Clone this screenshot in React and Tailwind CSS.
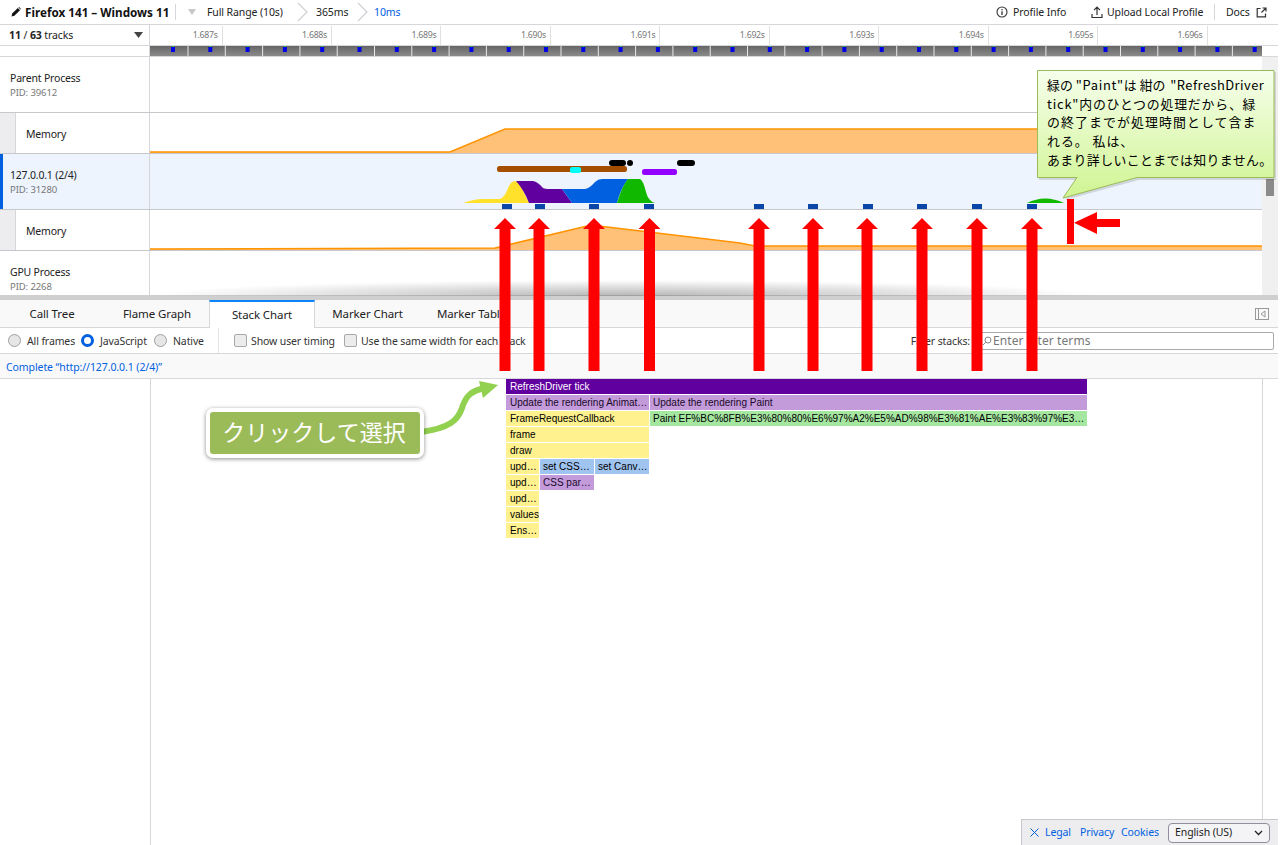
const UI = "font-['Noto_Sans','Open_Sans',sans-serif]";
const ticks = [1.687,1.688,1.689,1.690,1.691,1.692,1.693,1.694,1.695,1.696];
const segs = Array.from({length:30},(_,i)=>i);
const arrows = [505,539,594,649.5,759,813,867,922,977,1032];
const squares = [502,535,589,644,754,808,863,917,972,1027];

function Pencil(){return <svg width="10" height="10" viewBox="0 0 10 10" className="mr-[4px] shrink-0"><path d="M0.5 9.5 L1.2 6.6 L6.8 1 L9 3.2 L3.4 8.8 Z" fill="#111"/><path d="M7.4 .5 L8.1 0 L10 1.9 L9.5 2.6 Z" fill="#111"/></svg>}
function Chev(){return <svg width="12" height="22" viewBox="0 0 12 22" className="shrink-0"><path d="M1 2 L10 11 L1 20" fill="none" stroke="#d0d0d4" strokeWidth="1.2"/></svg>}

function TopBar(){
  return <div className="flex h-[25px] items-center whitespace-nowrap border-b border-[#d7d7db] bg-white pl-[11px] text-[10.5px] text-[#222] tracking-[-0.1px]">
    <Pencil/>
    <span className="w-[147px] shrink-0 pt-[1px] text-[11.7px] font-bold text-[#111] tracking-[0px]">Firefox 141 – Windows 11</span>
    <div className="ml-[3px] h-[16px] w-px bg-[#d7d7db]"/>
    <svg width="8" height="6" viewBox="0 0 8 6" className="ml-[12px]"><path d="M0 0H8L4 6Z" fill="#c8c8cc"/></svg>
    <span className="ml-[11px] w-[78px] pt-[1px]">Full Range (10s)</span>
    <div className="ml-[12px] flex w-[19px]"><Chev/></div>
    <span className="w-[32px] pt-[1px]">365ms</span>
    <div className="ml-[9px] flex w-[17px]"><Chev/></div>
    <span className="pt-[1px] text-[#0060df]">10ms</span>
    <div className="ml-auto flex items-center">
      <svg width="12" height="12" viewBox="0 0 12 12"><circle cx="6" cy="6" r="5" fill="none" stroke="#333" strokeWidth="1.1"/><path d="M6 5.2V9M6 3V4.2" stroke="#333" strokeWidth="1.3"/></svg>
      <span className="ml-[5px] w-[54px] pt-[1px]">Profile Info</span>
      <svg width="12" height="13" viewBox="0 0 12 13" className="ml-[24px]"><path d="M6 9V1.5M3 4.2L6 1.2L9 4.2M1 8V11.5H11V8" fill="none" stroke="#333" strokeWidth="1.2"/></svg>
      <span className="ml-[4px] w-[97px] pt-[1px]">Upload Local Profile</span>
      <div className="ml-[10px] h-[16px] w-px bg-[#d7d7db]"/>
      <span className="ml-[11px] w-[25px] pt-[1px]">Docs</span>
      <svg width="11" height="11" viewBox="0 0 11 11" className="ml-[5px] mr-[11px]"><path d="M4.5 1.5H1.2V9.8H9.5V6.5M6.5 1H10V4.5M10 1L5.5 5.5" fill="none" stroke="#333" strokeWidth="1.2"/></svg>
    </div>
  </div>;
}

function Ruler(){
  return <div className="flex h-[21px] border-b border-[#d7d7db] bg-white">
    <div className="flex w-[150px] shrink-0 items-center justify-between border-r border-[#d7d7db] pl-[9px] pr-[6px] text-[10.5px] text-[#222] tracking-[-0.1px]">
      <span className="pt-[2px]"><b>11</b> / <b>63</b> tracks</span>
      <svg width="9" height="6" viewBox="0 0 9 6"><path d="M0 0H9L4.5 6Z" fill="#444"/></svg>
    </div>
    <div className="flex flex-1 overflow-hidden pt-[1px] text-[8.8px] text-[#777] tracking-[-0.3px]">
      {ticks.map((t,i)=><div key={t} className={`flex shrink-0 items-center justify-end border-r border-[#e0e0e0] pr-[4px] ${i===0?'w-[72.6px]':'w-[109.45px]'}`}>{t.toFixed(3)}s</div>)}
    </div>
  </div>;
}

function TickRow(){
  return <div className="flex h-[11px] border-b border-[#d7d7db] bg-white">
    <div className="w-[150px] shrink-0 border-r border-[#d7d7db]"/>
    <svg width="1112" height="10" viewBox="150 46 1112 10" className="block">
      <defs><linearGradient id="tg" x1="0" y1="0" x2="0" y2="1"><stop offset="0" stopColor="#666"/><stop offset="1" stopColor="#8a8a8a"/></linearGradient></defs>
      <rect x="150" y="46" width="1112" height="10" fill="url(#tg)"/>
      {segs.map(i=><g key={i}>
        <rect x={187.5+i*37.3} y="46" width="1" height="10" fill="#e8e8e8"/>
        <rect x={171+i*37.3} y="47" width="4" height="5" fill="#0000e6"/>
        <rect x={172+i*37.3} y="46" width="2" height="1" fill="#22c050"/>
      </g>)}
    </svg>
  </div>;
}

function Label({title,pid,selected}){
  return <div className={`relative flex w-[150px] shrink-0 flex-col justify-start border-r border-[#d7d7db] pl-[10px] pt-[14px] ${selected?'bg-[#edf4fd]':'bg-white'}`}>
    {selected && <div className="absolute left-0 top-0 bottom-0 w-[3px] bg-[#0060df]"/>}
    <div className="text-[10.5px] leading-[15px] text-[#222] tracking-[-0.2px]">{title}</div>
    <div className="text-[9.5px] leading-[13px] text-[#777] tracking-[-0.1px]">PID: {pid}</div>
  </div>;
}
function MemLabel(){
  return <div className="flex w-[150px] shrink-0 border-r border-[#d7d7db] bg-white">
    <div className="w-[16px] border-r border-[#d7d7db] bg-[#ededf0]"/>
    <div className="flex items-center pl-[10px] pt-[4px] text-[10.5px] text-[#222] tracking-[-0.2px]">Memory</div>
  </div>;
}

function Tracks(){
  return <div className="flex h-[238px]">
    <div className="flex w-[1262px] shrink-0 flex-col overflow-hidden">
      <div className="flex h-[56px] shrink-0 border-b border-[#c8c8cc]"><Label title="Parent Process" pid="39612"/><div className="flex-1 bg-white"/></div>
      <div className="flex h-[41px] shrink-0 border-b border-[#c8c8cc]"><MemLabel/>
        <svg className="block" width="1112" height="40" viewBox="150 113 1112 40">
          <path d="M150 152L450 152L505 129L1262 129L1262 153L150 153Z" fill="#ffc078"/>
          <path d="M150 152L450 152L505 129L1262 129" fill="none" stroke="#ff9400" strokeWidth="1.5"/>
        </svg>
      </div>
      <div className="flex h-[56px] shrink-0 border-b border-[#c8c8cc] bg-[#edf4fd]"><Label title="127.0.0.1 (2/4)" pid="31280" selected/>
        <svg className="block" width="1112" height="55" viewBox="150 154 1112 55">
          <path d="M463 203Q475 199 482 199L500 199Q505 197 508 188Q511 181 515 181Q520 182 524 193L529 203Z" fill="#ffe02a"/>
          <path d="M516 181L533 181Q538 182 543 188Q545 189 548 189L562 189L572 203L529 203Q524 190 516 181Z" fill="#5f009f"/>
          <path d="M562 189L585 189Q590 188 595 182Q598 179 602 179L628 179Q620 190 617 203L572 203Z" fill="#0060df"/>
          <path d="M617 203Q622 186 628 179L640 179Q643 180 646 192Q648 201 655 203Z" fill="#10b900"/>
          <rect x="497" y="166" width="130" height="6" rx="2.5" fill="#a44e00"/>
          <rect x="570" y="167" width="11" height="6" rx="2" fill="#00ffff"/>
          <rect x="609" y="160" width="17" height="6" rx="3" fill="#000"/>
          <circle cx="630" cy="163" r="3" fill="#000"/>
          <rect x="677" y="160" width="18" height="6" rx="3" fill="#000"/>
          <rect x="642" y="169" width="35" height="6" rx="2.5" fill="#9400ff"/>
          <path d="M1027 203Q1045 194 1064 203Z" fill="#10b900"/>
          {squares.map(x=><rect key={x} x={x} y="204" width="10" height="5" fill="#0a46a8"/>)}
        </svg>
      </div>
      <div className="flex h-[41px] shrink-0 border-b border-[#c8c8cc]"><MemLabel/>
        <svg className="block" width="1112" height="40" viewBox="150 210 1112 40">
          <path d="M150 249L495 248L585 226.5L603 226.5L740 243L755 246L1262 246L1262 250L150 250Z" fill="#ffc078"/>
          <path d="M150 249L495 248L585 226.5L603 226.5L740 243L755 246L1262 246" fill="none" stroke="#ff9400" strokeWidth="1.5"/>
        </svg>
      </div>
      <div className="flex h-[56px] shrink-0"><Label title="GPU Process" pid="2268"/><div className="flex-1 bg-white"/></div>
    </div>
    <div className="flex-1 bg-[#f0f0f0] pl-[4px] pt-[122px]"><div className="h-[17px] w-[8px] bg-[#8a8a8a]"/></div>
  </div>;
}

function Tabs(){
  const t=[["Call Tree","w-[102px] pl-[2px]"],["Flame Graph","w-[107px] pl-[3px]"],["Stack Chart","w-[106px]"],["Marker Chart","w-[105px]"],["Marker Table","w-[103px]"]];
  return <div className="flex h-[28px] border-b border-[#d7d7db] bg-[#f9f9fa] text-[11.5px] text-[#222] tracking-[-0.1px]">
    {t.map(([n,w])=> n==="Stack Chart"
      ? <div key={n} className={`${w} -mb-px flex items-center justify-center border-t-2 border-r border-l border-t-[#0a84ff] border-x-[#d7d7db] bg-white`}>{n}</div>
      : <div key={n} className={`${w} flex items-center justify-center`}>{n}</div>)}
    <svg width="14" height="12" viewBox="0 0 14 12" className="ml-auto mr-[9px] mt-[8px]"><rect x=".5" y=".5" width="13" height="11" fill="none" stroke="#999"/><path d="M3.5 0V12" stroke="#999"/><path d="M10 3V9L6 6Z" fill="none" stroke="#999"/></svg>
  </div>;
}
function Radio({on,children,cls}){
  return <label className={`flex items-center ${cls}`}>
    {on ? <span className="h-[13px] w-[13px] rounded-full border-[3.5px] border-[#0060df] bg-white"/>
        : <span className="h-[13px] w-[13px] rounded-full border border-[#a0a0a0] bg-[#e6e6e6]"/>}
    <span className="ml-[6px] pt-[2px]">{children}</span>
  </label>;
}
function Check({children,cls}){
  return <label className={`flex items-center ${cls}`}>
    <span className="h-[13px] w-[13px] rounded-[2px] border border-[#a8a8a8] bg-[#ececec]"/>
    <span className="ml-[4px] pt-[2px]">{children}</span>
  </label>;
}
function Settings(){
  return <div className="flex h-[26px] items-center border-b border-[#d7d7db] bg-white text-[10.5px] text-[#333] tracking-[-0.12px]">
    <Radio cls="ml-[8px] w-[73px]">All frames</Radio>
    <Radio on cls="w-[73px]">JavaScript</Radio>
    <Radio cls="w-[64px]">Native</Radio>
    <div className="h-full w-px bg-[#e4e4e4]"/>
    <Check cls="ml-[15px] w-[110px]">Show user timing</Check>
    <Check>Use the same width for each stack</Check>
    <span className="ml-auto mr-[3px] pt-[2px]">Filter stacks:</span>
    <div className="mr-[4px] flex h-[18px] w-[301px] items-center rounded-[2px] border border-[#aaa] bg-white pl-[8px]">
      <svg width="10" height="10" viewBox="0 0 10 10" className="shrink-0"><circle cx="6" cy="4" r="3" fill="none" stroke="#888"/><path d="M3.8 6.2L1 9" stroke="#888"/></svg>
      <span className="ml-[1px] pt-[1px] text-[12px] text-[#777] tracking-[0.1px]">Enter filter terms</span>
    </div>
  </div>;
}
function Crumb(){
  return <div className="flex h-[25px] items-center border-b border-[#d7d7db] bg-[#f9f9fa] pl-[6px] pt-[3px] text-[10.5px] text-[#0060df] tracking-[-0.08px]">Complete “http://127.0.0.1 (2/4)”</div>;
}
function Cell({w,c,children}){
  return <div className={`flex h-[15px] shrink-0 items-center overflow-hidden whitespace-nowrap pb-[1px] pl-[4px] ${w} ${c}`}>{children}</div>;
}
const Y="bg-[#fff28e] text-black", L="bg-[#c39bdb] text-[#1a0a2a]", B="bg-[#a0c4f0] text-black";
function Chart(){
  return <div className="flex h-[466px] bg-white">
    <div className="w-[151px] shrink-0 border-r border-[#d7d7db]"/>
    <div className="flex w-[1112px] shrink-0 flex-col gap-px border-r border-[#d7d7db] pl-[355px] font-['Liberation_Sans',Arial,sans-serif] text-[10px]">
      <div className="flex"><Cell w="w-[581px]" c="bg-[#5f009f] text-white">RefreshDriver tick</Cell></div>
      <div className="flex gap-px"><Cell w="w-[143px]" c={L}>Update the rendering Animat…</Cell><Cell w="w-[437px] !pl-[3px]" c={L}>Update the rendering Paint</Cell></div>
      <div className="flex gap-px"><Cell w="w-[143px]" c={Y}>FrameRequestCallback</Cell><Cell w="w-[437px] !pl-[3px]" c="bg-[#a5e6a0] text-black">Paint EF%BC%8FB%E3%80%80%E6%97%A2%E5%AD%98%E3%81%AE%E3%83%97%E3…</Cell></div>
      <div className="flex"><Cell w="w-[143px]" c={Y}>frame</Cell></div>
      <div className="flex"><Cell w="w-[143px]" c={Y}>draw</Cell></div>
      <div className="flex gap-px"><Cell w="w-[33px]" c={Y}>upd…</Cell><Cell w="w-[54px] !pl-[3px]" c={B}>set CSS…</Cell><Cell w="w-[54px] !pl-[3px]" c={B}>set Canv…</Cell></div>
      <div className="flex gap-px"><Cell w="w-[33px]" c={Y}>upd…</Cell><Cell w="w-[54px] !pl-[3px]" c={L}>CSS par…</Cell></div>
      <div className="flex"><Cell w="w-[33px]" c={Y}>upd…</Cell></div>
      <div className="flex"><Cell w="w-[33px]" c={Y}>values</Cell></div>
      <div className="flex"><Cell w="w-[33px]" c={Y}>Ens…</Cell></div>
    </div>
  </div>;
}
function Footer(){
  return <div className="absolute right-0 bottom-0 flex h-[26px] w-[257px] items-center border-t border-l border-[#c8c8cc] bg-[#ededf0] pl-[8px] text-[10.5px] text-[#0060df] tracking-[-0.1px]">
    <svg width="9" height="9" viewBox="0 0 9 9"><path d="M.5 .5L8.5 8.5M8.5 .5L.5 8.5" stroke="#0060df" strokeWidth="1"/></svg>
    <span className="ml-[6px] w-[35px]">Legal</span>
    <span className="w-[41px]">Privacy</span>
    <span className="w-[47px]">Cookies</span>
    <div className="flex h-[20px] w-[102px] items-center justify-between rounded-[4px] border border-[#8f8f9d] bg-[#f4f4f6] pl-[6px] pr-[6px] text-[10.5px] text-[#222]">
      <span>English (US)</span>
      <svg width="9" height="6" viewBox="0 0 9 6"><path d="M1 1L4.5 4.5L8 1" fill="none" stroke="#222" strokeWidth="1.3"/></svg>
    </div>
  </div>;
}
function Overlay(){
  return <svg width="1278" height="845" viewBox="0 0 1278 845" className="absolute left-0 top-0 pointer-events-none">
    {arrows.map(x=><path key={x} d={`M${x} 218L${x+11} 229L${x+5.5} 229L${x+5.5} 371L${x-5.5} 371L${x-5.5} 229L${x-11} 229Z`} fill="#ff0000"/>)}
    <rect x="1067" y="199" width="7" height="45" fill="#ff0000"/>
    <path d="M1074 222.7L1097 212L1097 219L1120 219L1120 227L1097 227L1097 234Z" fill="#ff0000"/>
    <path d="M421 432C450 428 458 420 462 408C466 395 472 391 484 388" fill="none" stroke="#92d050" strokeWidth="6"/>
    <path d="M498 385L479 381L483 398Z" fill="#92d050"/>
    <defs><linearGradient id="cg" x1="0" y1="0" x2="0" y2="1"><stop offset="0" stopColor="#f6ffec"/><stop offset="0.85" stopColor="#d6f6a0"/><stop offset="1" stopColor="#d0f490"/></linearGradient></defs>
    <path d="M1039 180L1079 180L1065 200L1139 180L1276 180L1276 72L1039 72Z" fill="#000" opacity="0.12"/>
    <path d="M1037.5 70.5H1274V177.5H1137L1063 198L1077 177.5H1037.5Z" fill="url(#cg)" stroke="#9bbb59"/>
  </svg>;
}
function Callout(){
  return <div className="absolute left-[1047px] top-[76px] flex flex-col font-['Noto_Sans_CJK_JP','Noto_Sans',sans-serif] text-[12.9px] leading-[18.7px] text-black whitespace-nowrap">
    <div>緑の <span className="tracking-[0.7px]">"Paint"</span>は 紺の <span className="ml-[2px] tracking-[0.45px]">"RefreshDriver</span></div>
    <div className="tracking-[0.8px]">tick"内のひとつの処理だから、緑</div>
    <div className="tracking-[1.1px]">の終了までが処理時間として含ま</div>
    <div className="tracking-[1px]">れる。 私は、</div>
    <div className="tracking-[0.4px]">あまり詳しいことまでは知りません。</div>
  </div>;
}
function ClickBtn(){
  return <div className="absolute left-[206px] top-[408px] flex h-[50px] w-[218px] items-center justify-center rounded-[7px] border-[4px] border-white bg-[#9bbb59] pb-[3px] pr-[2px] font-['Noto_Sans_CJK_JP',sans-serif] text-[23px] text-white shadow-[0_1px_4px_rgba(0,0,0,0.45)]">クリックして選択</div>;
}
export default function App(){
  return <div className={`relative h-[845px] w-[1278px] overflow-hidden bg-white ${UI}`}>
    <TopBar/>
    <Ruler/>
    <TickRow/>
    <Tracks/>
    <div className="h-[5px] bg-[#cfcfcf]"/>
    <Tabs/>
    <Settings/>
    <Crumb/>
    <Chart/>
    <div className="absolute left-[150px] top-[280px] h-[16px] w-[950px] bg-[radial-gradient(ellipse_50%_100%_at_50%_100%,rgba(120,120,120,0.55),rgba(120,120,120,0))]"/>
    <Footer/>
    <Overlay/>
    <Callout/>
    <ClickBtn/>
  </div>;
}
